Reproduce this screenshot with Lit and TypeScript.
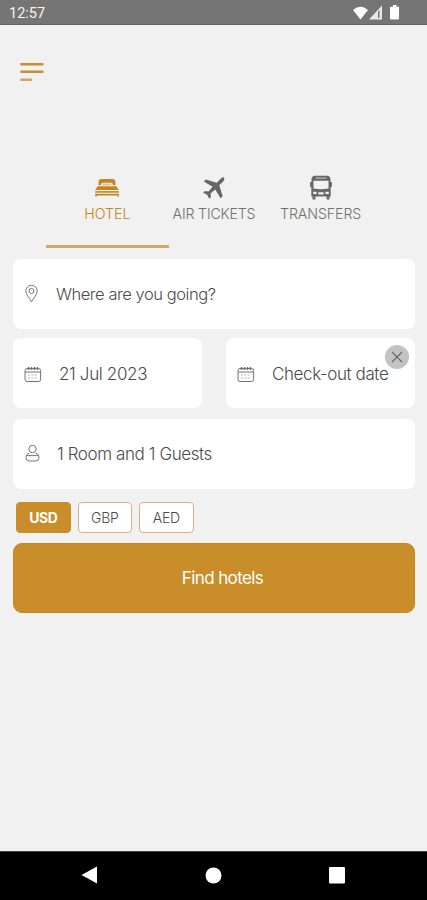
import { LitElement, html, css, svg } from "lit";
import { customElement, state } from "lit/decorators.js";
import { classMap } from "lit/directives/class-map.js";

const bed = svg`<svg width="24" height="20" viewBox="0 0 24 20" fill="currentColor">
  <path d="M3.600 7.200V3.600Q3.600.9 6.300.9H17.700Q20.400.9 20.400 3.600V7.200H17.800V6.600Q17.800 4.800 16 4.800H8Q6.200 4.800 6.200 6.600V7.200Z"/>
  <path opacity=".45" d="M7.800 5.600H16.200V7.400H7.800Z"/>
  <path d="M2.600 8.200H21.400L23.800 12H.2Z"/><path d="M.2 13.100H23.800V14.700H.2Z"/><path d="M.2 15.800H23.800V18.600H22.200V17.400H1.800V18.600H.2Z"/></svg>`;
const plane = svg`<svg width="24" height="24" viewBox="0 0 24 24" fill="currentColor">
  <path d="M21.700 1.500C22.800 2.400 22.500 3.900 21.100 5.400L17.300 9.300L20.600 20.300L18.600 22.300L13.200 13.400L8.600 17.400L9 20.900L7.200 22.700L5.200 18.700L1.200 16.800L2.900 15L6.500 15.400L10.600 10.800L1.800 5.400L3.800 3.400L14.700 6.700L18.500 2.900C19.800 1.500 20.900.8 21.700 1.500Z"/></svg>`;
const bus = svg`<svg width="24" height="26" viewBox="0 0 24 26" fill="currentColor">
  <path fill-rule="evenodd" d="M6 .8H18Q21.300.8 21.500 4.500V7H22.900V12H21.700V21.600H20.500V24.400H17.600V21.600H6.400V24.400H3.500V21.600H2.300V12H1.100V7H2.500V4.500Q2.700.8 6 .8ZM4.500 5.800V13.500Q12 15 19.500 13.500V5.800ZM4.200 16.800V19H7.600V16.800ZM16.400 16.800V19H19.800V16.800ZM9.400 17.300V19.400H14.600V17.300Z"/>
  <path d="M6.600 2.300H17.400V3.800H6.600Z" fill="#aaa"/></svg>`;
const pin = svg`<svg width="14" height="20" viewBox="0 0 14 20" fill="none" stroke="currentColor">
  <path d="M6.500 18C5 14.400 .8 11 .8 7A5.700 5.700 0 0 1 12.200 7C12.200 11 8 14.400 6.500 18Z"/><circle cx="6.500" cy="7" r="2.500"/></svg>`;
const calendar = svg`<svg width="18" height="17" viewBox="0 0 18 17" fill="none" stroke="currentColor">
  <rect x="1" y="2.500" width="15.600" height="13" rx="2"/><path d="M1 6H16.600"/>
  <path stroke-width="1.500" d="M4.500 1V4M7.500 1V4M10.500 1V4M13.500 1V4"/>
  <path opacity=".35" stroke-width="1.400" stroke-dasharray="2 1.300" d="M4 9H14M4 12H14"/></svg>`;
const guest = svg`<svg width="16" height="20" viewBox="0 0 16 20" fill="none" stroke="currentColor">
  <circle cx="7.500" cy="5" r="3.700"/><path d="M4.300 9.200C2.300 9.500 1 11.200 1 13.600Q1 17 4.200 17H10.800Q14 17 14 13.600C14 11.200 12.700 9.500 10.700 9.200M1.400 11.600H13.600"/></svg>`;

@customElement("app-root")
export class AppRoot extends LitElement {
  static styles = css`
    :host { display: flex; flex-direction: column; height: 900px; background: #f1f1f1; color: #4b4b4b;
      font-family: Inter, "Liberation Sans", sans-serif; font-weight: 300; overflow: hidden; }
    * { box-sizing: border-box; }
    svg { display: block; flex: none; }
    button { font: inherit; color: inherit; padding: 0; border: 0; background: none; }
    .status { height: 25px; flex: none; background: #757575; border-bottom: 1px solid #646464; color: #f4f4f4;
      display: flex; align-items: center; justify-content: space-between; padding: 2px 26px 0 9px;
      font: 400 14.5px Roboto, sans-serif; }
    .top { height: 138px; flex: none; padding: 37px 20px 0; color: #c78f31; }
    .tabs { height: 85px; flex: none; display: flex; padding: 0 53px 0 54px; }
    .tab { width: 33.333%; display: flex; flex-direction: column; align-items: center; position: relative; color: #666; }
    .tab .ico { height: 50px; display: flex; align-items: center; }
    .tab .lbl { font-size: 14.2px; line-height: 18px; margin-top: -8px; white-space: nowrap; color: #707070; }
    .tab.on, .tab.on .lbl { color: #c58622; }
    .tab.on::after { content: ""; position: absolute; left: -8px; top: 82px; width: 123px; height: 3px; background: #d5a66b; }
    .lbl.hotel { letter-spacing: 0; }
    .lbl.air { letter-spacing: -.2px; }
    .lbl.transfers { letter-spacing: -.1px; }
    .form { padding: 11px 12px 0 13px; display: flex; flex-direction: column; }
    .card { height: 70px; background: #fff; border-radius: 8px; display: flex; align-items: center; padding-left: 12px;
      font-size: 17px; position: relative; white-space: nowrap; }
    .card .ico { width: 31px; color: #777; flex: none; }
    .dates { display: grid; grid-template-columns: 189px 189px; gap: 24px; margin: 9px 0 11px; }
    .dates .card { padding: 2px 0 0 11px; }
    .dates .ico { width: 35px; color: #72727c; }
    .where { font-size: 16.5px; letter-spacing: -.45px; }
    .in { letter-spacing: -.35px; }
    .out { letter-spacing: -.4px; }
    .guests { letter-spacing: -.4px; padding-left: 1px; }
    .clear { position: absolute; right: 6px; top: 7px; width: 24px; height: 24px; border-radius: 50%; background: #c3c3c3;
      display: grid; place-items: center; color: #666; }
    .chips { display: flex; gap: 7px; padding: 13px 0 10px 3px; }
    .chip { width: 54.500px; height: 31px; border-radius: 4px; border: 1px solid #dbaf83; background: #fff; font-size: 14px;
      letter-spacing: -.3px; text-align: center; }
    .chip.on { background: #c98d2a; border-color: #c98d2a; color: #fff; font-weight: 700; letter-spacing: -.5px; }
    .find { height: 70px; border-radius: 9px; background: #c98d2a; border: 1px solid #c58620; color: #fff; font-size: 17px;
      font-weight: 400; letter-spacing: -.6px; padding-left: 17px; }
    .nav { margin-top: auto; height: 49px; flex: none; background: #000; border-top: 1px solid #444; display: flex;
      justify-content: space-between; align-items: center; padding: 0 82px 2px 81px; }
  `;

  @state() private tab = "hotel";
  @state() private currency = "USD";

  private tabs = [
    { id: "hotel", label: "HOTEL", icon: bed },
    { id: "air", label: "AIR TICKETS", icon: plane },
    { id: "transfers", label: "TRANSFERS", icon: bus },
  ];

  render() {
    return html`
      <div class="status"><span>12:57</span>
        <svg width="50" height="18" viewBox="0 0 50 18" fill="#fff"><path d="M2 6Q9.500-.5 17 6L9.500 15.500Z"/>
          <path d="M31 1.500V15.500H18Z" opacity=".85"/><path d="M28.500 6V14H27V7.500Z" fill="#757575"/><path d="M40 2.700H42V1.100H45.500V2.700H47.500Q48 2.700 48 3.500V14.500Q48 15.500 47 15.500H40Q39 15.500 39 14.500V3.500Q39 2.700 40 2.700Z"/></svg>
      </div>
      <div class="top"><svg width="24" height="20" viewBox="0 0 24 20" stroke="currentColor" stroke-width="2.400" stroke-linecap="round">
        <path d="M1.300 2.300H22.500M1.300 9.800H22.500"/><path d="M1.300 17.700H11" stroke="#d0a367"/></svg></div>
      <div class="tabs">${this.tabs.map((t) => html`
        <button class=${classMap({ tab: true, on: this.tab === t.id })} @click=${() => (this.tab = t.id)}>
          <span class="ico">${t.icon}</span><span class="lbl ${t.id}">${t.label}</span></button>`)}
      </div>
      <div class="form">
        <div class="card"><span class="ico">${pin}</span><span class="where">Where are you going?</span></div>
        <div class="dates">
          <div class="card"><span class="ico">${calendar}</span><span class="in">21 Jul 2023</span></div>
          <div class="card"><span class="ico">${calendar}</span><span class="out">Check-out date</span>
            <button class="clear"><svg width="12" height="12" viewBox="0 0 12 12" stroke="currentColor" stroke-width="1.100"><path d="M1 1L11 11M11 1L1 11"/></svg></button></div>
        </div>
        <div class="card"><span class="ico">${guest}</span><span class="guests">1 Room and 1 Guests</span></div>
        <div class="chips">${["USD", "GBP", "AED"].map((c) => html`
          <button class=${classMap({ chip: true, on: this.currency === c })} @click=${() => (this.currency = c)}>${c}</button>`)}</div>
        <button class="find">Find hotels</button>
      </div>
      <div class="nav">
        <svg width="17" height="18" viewBox="0 0 17 18" fill="#fff"><path d="M.5 9L16 .5V17.500Z"/></svg>
        <svg width="17" height="17" viewBox="0 0 17 17" fill="#fff"><circle cx="8.500" cy="8.500" r="8"/></svg>
        <svg width="16" height="17" viewBox="0 0 16 17" fill="#fff"><rect width="16" height="16.500" rx="1"/></svg>
      </div>`;
  }
}
